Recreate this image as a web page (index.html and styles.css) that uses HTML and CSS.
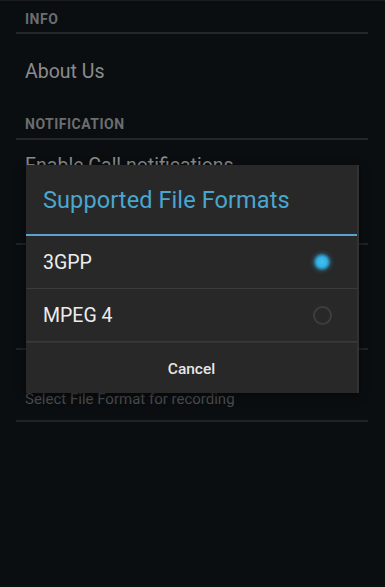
FILE: index.html
```html
<!DOCTYPE html>
<html lang="en">
<head>
    <meta charset="UTF-8">
    <meta name="viewport" content="width=device-width, initial-scale=1.0">
    <title>Settings</title>
    <link rel="stylesheet" href="styles.css">
</head>
<body>

    <div class="screen">
        <div class="settings">
            <div class="category">INFO</div>
            <div class="pref single">About Us</div>

            <div class="category cat-second">NOTIFICATION</div>
            <div class="pref">
                <div class="pref-title">Enable Call notifications</div>
            </div>
            <div class="pref"></div>
            <div class="pref last">
                <div class="pref-summary">Select File Format for recording</div>
            </div>
        </div>

        <div class="dialog">
            <div class="dialog-title">Supported File Formats</div>
            <div class="option">
                <span>3GPP</span>
                <span class="radio checked"></span>
            </div>
            <div class="option">
                <span>MPEG 4</span>
                <span class="radio"></span>
            </div>
            <div class="dialog-buttons">
                <button>Cancel</button>
            </div>
        </div>
    </div>

</body>
</html>
```

FILE: styles.css
```css
* {
    box-sizing: border-box;
    margin: 0;
    padding: 0;
    font-family: Roboto, "Noto Sans", sans-serif;
}

html, body {
    width: 385px;
    height: 587px;
    overflow: hidden;
    background: #0b0e11;
}

.screen {
    position: relative;
    height: 587px;
    border-top: 1px solid #1b1d20;
}

.settings {
    padding: 0 17px 0 16px;
}

.category {
    height: 33px;
    padding: 10px 0 0 9px;
    font-size: 14px;
    font-weight: bold;
    letter-spacing: 0.5px;
    color: #6b6d6f;
    border-bottom: 2px solid #23272a;
}

.cat-second {
    height: 34px;
    padding-top: 10px;
}

.pref {
    height: 105px;
    padding: 14px 0 0 9px;
    border-bottom: 2px solid #1f2326;
}

.pref.single {
    height: 72px;
    padding: 26px 0 0 9px;
    font-size: 19.5px;
    color: #8a8b8c;
    border-bottom: none;
}

.pref-title {
    font-size: 19.5px;
    color: #8a8b8c;
}

.pref-summary {
    font-size: 15px;
    color: #4a4c4e;
}

.pref.last {
    height: 72px;
    padding-top: 40px;
}

/* dialog over the list */
.dialog {
    position: absolute;
    left: 26px;
    top: 164px;
    width: 333px;
    background: #282828;
    border-right: 2px solid #323232;
    box-shadow: 0 2px 8px rgba(0, 0, 0, 0.6);
}

.dialog-title {
    height: 71px;
    padding: 21px 0 0 17px;
    font-size: 23.5px;
    letter-spacing: 0.1px;
    color: #4aa6d0;
    border-bottom: 2px solid #5aa3cc;
}

.option {
    display: flex;
    align-items: center;
    justify-content: space-between;
    height: 53px;
    padding: 0 25px 0 17px;
    font-size: 19.5px;
    color: #ececec;
    border-bottom: 1px solid #3a3a3a;
}

.radio {
    width: 19px;
    height: 19px;
    border-radius: 50%;
    border: 2px solid #3d3d3d;
}

.radio.checked {
    width: 18px;
    height: 18px;
    margin-right: 1px;
    border: none;
    background: radial-gradient(circle, #45c0f0 0, #33b1e4 5px, #2b7c9f 7px, #2e4550 9px);
    box-shadow: 0 0 4px rgba(51, 181, 229, 0.4);
}

.dialog-buttons {
    height: 51px;
    display: flex;
    border-top: 1px solid #333;
}

.dialog-buttons button {
    flex: 1;
    background: none;
    border: none;
    font-size: 15.5px;
    font-weight: 500;
    color: #e6e6e6;
    padding-top: 2px;
}
```
